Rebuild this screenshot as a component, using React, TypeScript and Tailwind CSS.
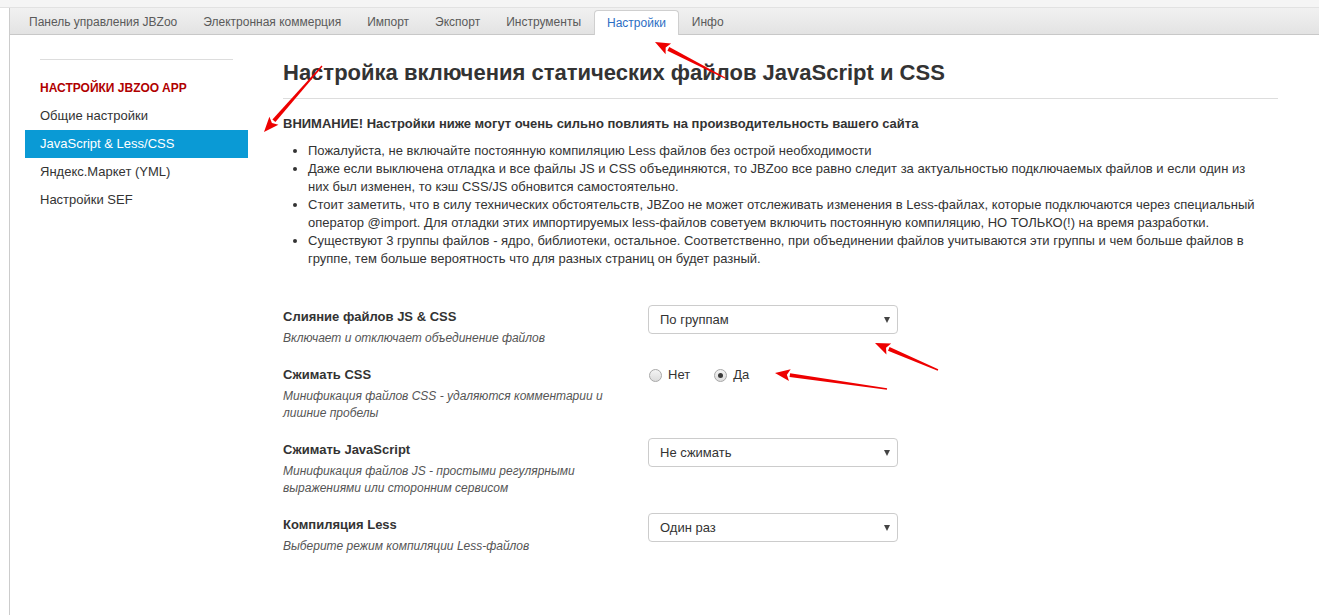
import React from "react";

const tabs = [
  "Панель управления JBZoo",
  "Электронная коммерция",
  "Импорт",
  "Экспорт",
  "Инструменты",
  "Настройки",
  "Инфо",
];

const menu = ["Общие настройки", "JavaScript & Less/CSS", "Яндекс.Маркет (YML)", "Настройки SEF"];

const bullets = [
  "Пожалуйста, не включайте постоянную компиляцию Less файлов без острой необходимости",
  "Даже если выключена отладка и все файлы JS и CSS объединяются, то JBZoo все равно следит за актуальностью подключаемых файлов и если один из них был изменен, то кэш CSS/JS обновится самостоятельно.",
  "Стоит заметить, что в силу технических обстоятельств, JBZoo не может отслеживать изменения в Less-файлах, которые подключаются через специальный оператор @import. Для отладки этих импортируемых less-файлов советуем включить постоянную компиляцию, НО ТОЛЬКО(!) на время разработки.",
  "Существуют 3 группы файлов - ядро, библиотеки, остальное. Соответственно, при объединении файлов учитываются эти группы и чем больше файлов в группе, тем больше вероятность что для разных страниц он будет разный.",
];

function Select({ value }: { value: string }) {
  return (
    <div className="w-[250px] h-[29px] border border-[#cccccc] rounded-[4px] bg-white flex items-center justify-between pl-[11px] pr-[7px] text-[13px] text-[#333]">
      <span>{value}</span>
      <span className="w-0 h-0 border-l-[3px] border-r-[3px] border-t-[6px] border-l-transparent border-r-transparent border-t-[#444]" />
    </div>
  );
}

function Radio({ label, checked }: { label: string; checked?: boolean }) {
  return (
    <label className="flex items-center gap-[6px] text-[13px] text-[#333]">
      <span className="w-[13px] h-[13px] rounded-full border border-[#a8a8a8] bg-linear-to-b from-[#f4f4f4] to-[#dcdcdc] flex items-center justify-center">
        {checked && <span className="w-[5px] h-[5px] rounded-full bg-[#3a3a3a]" />}
      </span>
      {label}
    </label>
  );
}

function Row({ title, desc, children }: { title: string; desc: string; children: React.ReactNode }) {
  return (
    <div className="flex mb-[16px]">
      <div className="w-[365px] shrink-0">
        <div className="text-[13px] leading-[24px] font-bold text-[#333]">{title}</div>
        <div className="mt-px w-[335px] text-[12px] leading-[17px] italic text-[#555]">{desc}</div>
      </div>
      <div>{children}</div>
    </div>
  );
}

function Arrow({ x1, y1, x2, y2 }: { x1: number; y1: number; x2: number; y2: number }) {
  const dx = x2 - x1;
  const dy = y2 - y1;
  const len = Math.hypot(dx, dy);
  const ux = dx / len;
  const uy = dy / len;
  const hl = 15;
  const hw = 6;
  const bx = x2 - ux * hl;
  const by = y2 - uy * hl;
  const head = `${x2},${y2} ${bx - uy * hw},${by + ux * hw} ${bx + ux * 3},${by + uy * 3} ${bx + uy * hw},${by - ux * hw}`;
  const tail = `${x1 - uy * 0.7},${y1 + ux * 0.7} ${x1 + uy * 0.7},${y1 - ux * 0.7} ${bx + uy * 2},${by - ux * 2} ${bx - uy * 2},${by + ux * 2}`;
  return (
    <g fill="#ee0000">
      <polygon points={tail} />
      <polygon points={head} />
    </g>
  );
}

export default function App() {
  return (
    <div className="relative w-[1319px] h-[615px] overflow-hidden bg-white font-['Liberation_Sans',Arial,sans-serif] text-[#333]">
      <div className="h-[8px] bg-[#f5f5f5] border-b border-[#e2e2e2]" />
      <div className="ml-[9px] border-l border-[#cccccc] h-[607px]">
        {/* Tabs */}
        <div className="h-[27px] pl-[6px] flex items-end border-b border-[#c8c8c8] bg-linear-to-b from-[#f1f1f1] to-[#e3e3e3]">
          {tabs.map((t) =>
            t === "Настройки" ? (
              <div
                key={t}
                className="h-[25px] -mb-px px-[12px] flex items-center bg-white border border-b-0 border-[#cfcfcf] rounded-t-[4px] text-[12px] text-[#2c6ec4]"
              >
                {t}
              </div>
            ) : (
              <div key={t} className="h-[24px] px-[13px] flex items-center text-[12px] text-[#5a5a5a]">
                {t}
              </div>
            )
          )}
        </div>

        <div className="flex">
          {/* Sidebar */}
          <div className="ml-[15px] w-[223px] pt-[24px] shrink-0">
            <div className="mx-[15px] border-t border-[#dddddd]" />
            <div className="mt-[14px] px-[15px] h-[28px] flex items-center text-[12px] font-bold text-[#b00000] uppercase">
              Настройки JBZoo App
            </div>
            {menu.map((m) => (
              <div
                key={m}
                className={
                  m === "JavaScript & Less/CSS"
                    ? "px-[15px] h-[28px] flex items-center text-[13px] text-white bg-[#0a9ad5]"
                    : "px-[15px] h-[28px] flex items-center text-[13px] text-[#333]"
                }
              >
                {m}
              </div>
            ))}
          </div>

          {/* Main */}
          <div className="ml-[35px] w-[995px]">
            <h1 className="mt-[23px] pb-[10px] border-b border-[#dddddd] text-[22px] leading-[30px] font-bold text-[#333]">
              Настройка включения статических файлов JavaScript и CSS
            </h1>
            <p className="mt-[16px] text-[13px] leading-[18px] font-bold">
              ВНИМАНИЕ! Настройки ниже могут очень сильно повлиять на производительность вашего сайта
            </p>
            <ul className="mt-[9px] pl-[25px] pr-[14px] list-disc text-[13px] leading-[18px]">
              {bullets.map((b) => (
                <li key={b}>{b}</li>
              ))}
            </ul>

            <div className="mt-[37px]">
              <Row title="Слияние файлов JS & CSS" desc="Включает и отключает объединение файлов">
                <Select value="По группам" />
              </Row>
              <Row title="Сжимать CSS" desc="Минификация файлов CSS - удаляются комментарии и лишние пробелы">
                <div className="h-[24px] flex items-center gap-[24px] pl-[1px]">
                  <Radio label="Нет" />
                  <Radio label="Да" checked />
                </div>
              </Row>
              <Row title="Сжимать JavaScript" desc="Минификация файлов JS - простыми регулярными выражениями или сторонним сервисом">
                <Select value="Не сжимать" />
              </Row>
              <Row title="Компиляция Less" desc="Выберите режим компиляции Less-файлов">
                <Select value="Один раз" />
              </Row>
            </div>
          </div>
        </div>
      </div>

      {/* Annotation arrows */}
      <svg className="absolute inset-0 pointer-events-none" width="1319" height="615">
        <Arrow x1={725} y1={78} x2={655} y2={42} />
        <Arrow x1={322} y1={66} x2={264} y2={132} />
        <Arrow x1={938} y1={370} x2={875} y2={343} />
        <Arrow x1={887} y1={389} x2={775} y2={373} />
      </svg>
    </div>
  );
}
